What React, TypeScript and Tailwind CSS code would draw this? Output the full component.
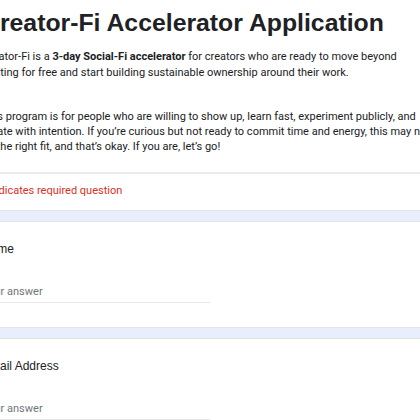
import React from 'react';

const Question: React.FC<{ label: string }> = ({ label }) => (
  <div className="bg-white border-y border-[#e3e3e3] pt-[18px] pb-[24px]">
    <p className="text-[12px] leading-[18px] text-[#202124] font-['Liberation_Sans',sans-serif]">{label}</p>
    <div className="mt-[26px] w-[228px] border-b border-[#e8e8e8] pb-[2px]">
      <span className="block text-[11px] leading-[16px] text-[#70757a] font-['Roboto',sans-serif]">Your answer</span>
    </div>
  </div>
);

const App: React.FC = () => {
  return (
    <div className="w-[420px] h-[420px] overflow-hidden bg-[#e8eefc]">
      <div className="-ml-[18px] w-[480px] flex flex-col gap-[10px]">
        {/* Header */}
        <div className="bg-white border-b border-[#e3e3e3]">
          <h1 className="pt-[7px] text-[24.8px] leading-[32px] font-bold text-[#202124] font-['Liberation_Sans',sans-serif] whitespace-nowrap">
            Creator-Fi Accelerator Application
          </h1>
          <div className="text-[#202124] text-[11px] font-['Roboto',sans-serif] whitespace-nowrap">
            <p className="mt-[10px] leading-[16px]">
              Creator-Fi is a <strong>3-day Social-Fi accelerator</strong> for creators who are ready to move beyond
              <br />
              posting for free and start building sustainable ownership around their work.
            </p>
            <p className="mt-[28px] leading-[15px]">
              This program is for people who are willing to show up, learn fast, experiment publicly, and
              <br />
              create with intention. If you’re curious but not ready to commit time and energy, this may not
              <br />
              be the right fit, and that’s okay. If you are, let’s go!
            </p>
          </div>
          <div className="mt-[18px] border-t-2 border-[#ececec] pt-[9px] pb-[11px]">
            <p className="text-[11px] leading-[16px] text-[#d93025] font-['Roboto',sans-serif]">
              * Indicates required question
            </p>
          </div>
        </div>

        <Question label="Name" />
        <Question label="Email Address" />
      </div>
    </div>
  );
};

export default App;
